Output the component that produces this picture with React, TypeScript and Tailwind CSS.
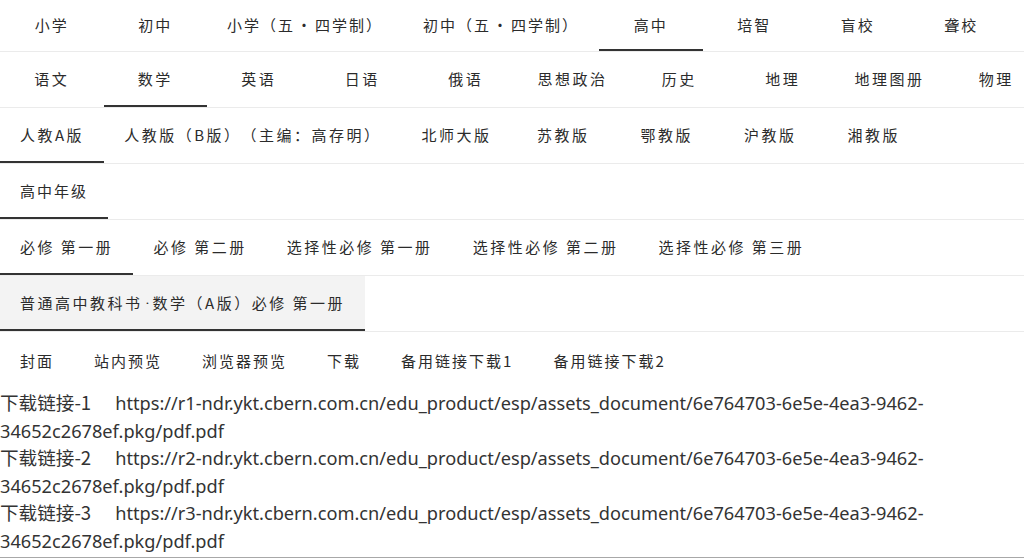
import React from "react";

type RowProps = {
  items: React.ReactNode[];
  selected: number;
  first?: boolean;
  shaded?: boolean;
  wide?: boolean;
};

function TabRow({ items, selected, first, shaded, wide }: RowProps) {
  return (
    <div
      className={`flex overflow-hidden border-b border-[#ebebeb] ${first ? "h-[52px]" : "h-[56px]"} ${
        wide ? "tracking-[2.5px]" : "tracking-[2px]"
      }`}
    >
      {items.map((t, i) => (
        <div
          key={i}
          className={`shrink-0 min-w-[103.5px] px-5 flex items-center justify-center whitespace-nowrap border-b-2 ${
            i === selected ? "border-[#333333]" : "border-transparent"
          } ${i === selected && shaded ? "bg-[#f3f3f3]" : ""}`}
        >
          <span className="pt-[2px]">{t}</span>
        </div>
      ))}
    </div>
  );
}

const Dot = () => <span className="inline-block mx-[1.5px]">•</span>;

const links = [1, 2, 3];

export default function App() {
  return (
    <div className="w-[1024px] h-[560px] overflow-hidden bg-white text-[#2b2b2b]">
      <div
        className="text-[15px] [text-spacing-trim:space-all]"
        style={{ fontFamily: '"Noto Sans CJK SC", "Noto Sans", sans-serif' }}
      >
        <TabRow
          first
          selected={4}
          items={[
            "小学",
            "初中",
            <>小学（五<Dot />四学制）</>,
            <>初中（五<Dot />四学制）</>,
            "高中",
            "培智",
            "盲校",
            "聋校",
          ]}
        />
        <TabRow
          wide
          selected={1}
          items={["语文", "数学", "英语", "日语", "俄语", "思想政治", "历史", "地理", "地理图册", "物理"]}
        />
        <TabRow
          wide
          selected={0}
          items={["人教A版", "人教版（B版）（主编：高存明）", "北师大版", "苏教版", "鄂教版", "沪教版", "湘教版"]}
        />
        <TabRow selected={0} items={["高中年级"]} />
        <TabRow
          wide
          selected={0}
          items={["必修 第一册", "必修 第二册", "选择性必修 第一册", "选择性必修 第二册", "选择性必修 第三册"]}
        />
        <TabRow
          wide
          shaded
          selected={0}
          items={[
            <>
              普通高中教科书
              <span
                className="inline-block w-[10px] text-center tracking-normal"
                style={{ fontFamily: "Roboto, sans-serif" }}
              >
                ·
              </span>
              数学（A版）必修 第一册
            </>,
          ]}
        />
        <div className="flex h-[56px] items-center tracking-[2px]">
          {["封面", "站内预览", "浏览器预览", "下载", "备用链接下载1", "备用链接下载2"].map((t) => (
            <div key={t} className="px-5 h-full flex items-center whitespace-nowrap">
              <span className="pt-[2px]">{t}</span>
            </div>
          ))}
        </div>
      </div>
      <div
        className="mt-[2px] text-[18.2px] leading-[27.5px] text-[#333333]"
        style={{ fontFamily: '"Noto Sans", "Noto Sans CJK SC", sans-serif' }}
      >
        {links.map((n) => (
          <div key={n}>
            <span
              className="mr-[24px] text-[18.6px] leading-[18px]"
              style={{ fontFamily: '"Noto Sans CJK SC", sans-serif' }}
            >
              下载链接-{n}
            </span>
            {`https://r${n}-ndr.ykt.cbern.com.cn/edu_product/esp/assets_document/6e764703-6e5e-4ea3-9462-`}
            <br />
            34652c2678ef.pkg/pdf.pdf
          </div>
        ))}
      </div>
      <div className="mt-[2px] border-t border-[#a8a8a8]" />
    </div>
  );
}
